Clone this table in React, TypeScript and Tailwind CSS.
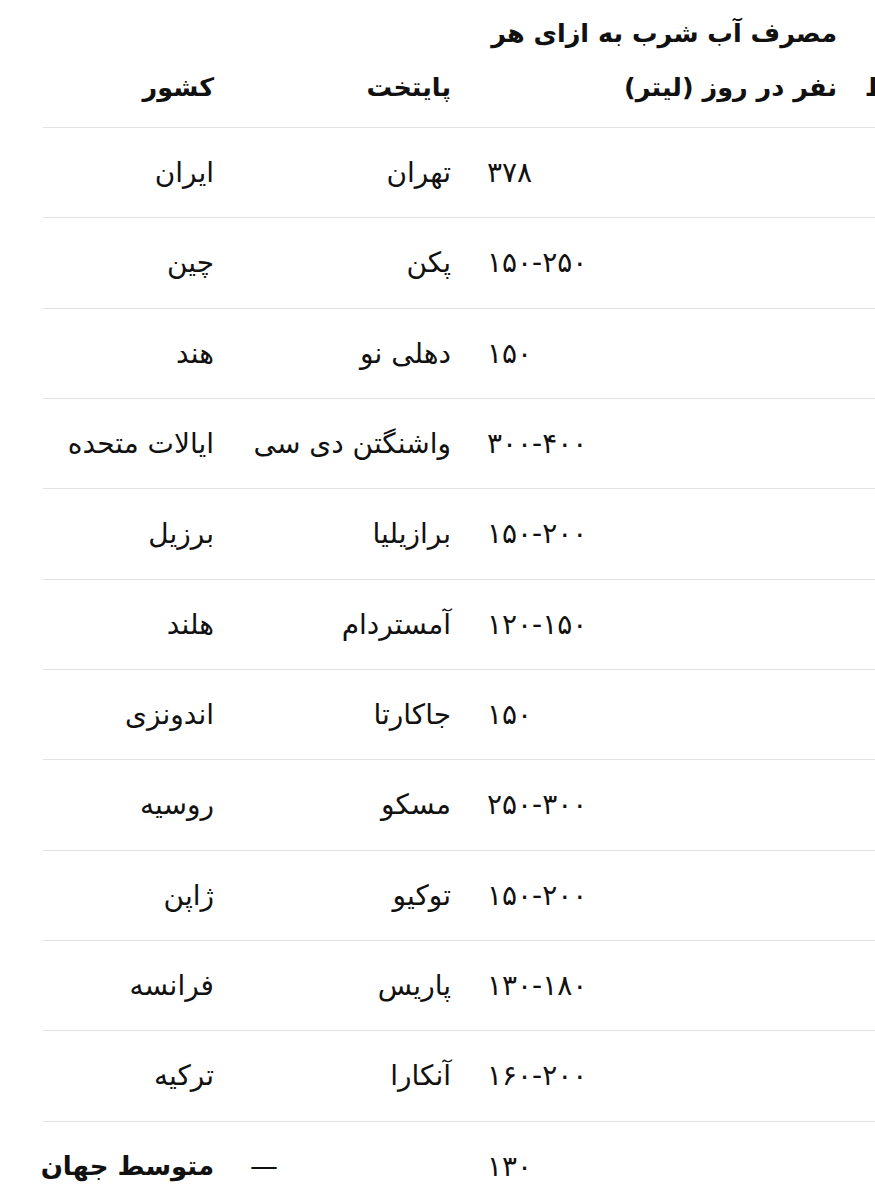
import React from 'react'

const rows: { country: string; capital: string; usage: string; bold?: boolean }[] = [
  { country: 'ایران', capital: 'تهران', usage: '۳۷۸' },
  { country: 'چین', capital: 'پکن', usage: '۱۵۰-۲۵۰' },
  { country: 'هند', capital: 'دهلی نو', usage: '۱۵۰' },
  { country: 'ایالات متحده', capital: 'واشنگتن دی سی', usage: '۳۰۰-۴۰۰' },
  { country: 'برزیل', capital: 'برازیلیا', usage: '۱۵۰-۲۰۰' },
  { country: 'هلند', capital: 'آمستردام', usage: '۱۲۰-۱۵۰' },
  { country: 'اندونزی', capital: 'جاکارتا', usage: '۱۵۰' },
  { country: 'روسیه', capital: 'مسکو', usage: '۲۵۰-۳۰۰' },
  { country: 'ژاپن', capital: 'توکیو', usage: '۱۵۰-۲۰۰' },
  { country: 'فرانسه', capital: 'پاریس', usage: '۱۳۰-۱۸۰' },
  { country: 'ترکیه', capital: 'آنکارا', usage: '۱۶۰-۲۰۰' },
  { country: 'متوسط جهان', capital: '—', usage: '۱۳۰', bold: true },
]

const th = 'whitespace-nowrap pb-[13px] pt-[6px] text-start align-bottom text-[25.5px] font-bold leading-[54px]'
const td = 'whitespace-nowrap py-[18px] text-start leading-[53.35px]'

export default function App() {
  return (
    <div className="h-[1200px] w-[875px] overflow-hidden bg-white pl-[43px] font-['DejaVu_Sans',sans-serif] text-[28px] text-[#111]">
      <table className="w-[1050px] table-fixed border-collapse">
        <colgroup>
          <col className="w-[189px]" />
          <col className="w-[237px]" />
          <col className="w-[386px]" />
          <col className="w-[238px]" />
        </colgroup>
        <thead>
          <tr className="border-b border-[#e3e3e3]">
            <th dir="auto" className={`${th} pl-0 pr-[18px]`}>کشور</th>
            <th dir="auto" className={`${th} px-[18px]`}>پایتخت</th>
            <th dir="auto" className={`${th} px-[18px]`}>
              مصرف آب شرب به ازای هر
              <br />
              نفر در روز (لیتر)
            </th>
            <th dir="auto" className={`${th} px-[18px]`}>
              وضعیت
              <br />
              نسبت به متوسط
            </th>
          </tr>
        </thead>
        <tbody>
          {rows.map((r) => (
            <tr key={r.country} className={r.bold ? '' : 'border-b border-[#e3e3e3]'}>
              <td dir="auto" className={`${td} pl-0 pr-[18px] ${r.bold ? 'text-[26px] font-bold' : ''}`}>{r.country}</td>
              <td dir="auto" className={`${td} px-[18px]`}>{r.capital}</td>
              <td dir="auto" className={`${td} px-[18px]`}>{r.usage}</td>
              <td dir="auto" className={`${td} px-[18px]`}></td>
            </tr>
          ))}
        </tbody>
      </table>
    </div>
  )
}
